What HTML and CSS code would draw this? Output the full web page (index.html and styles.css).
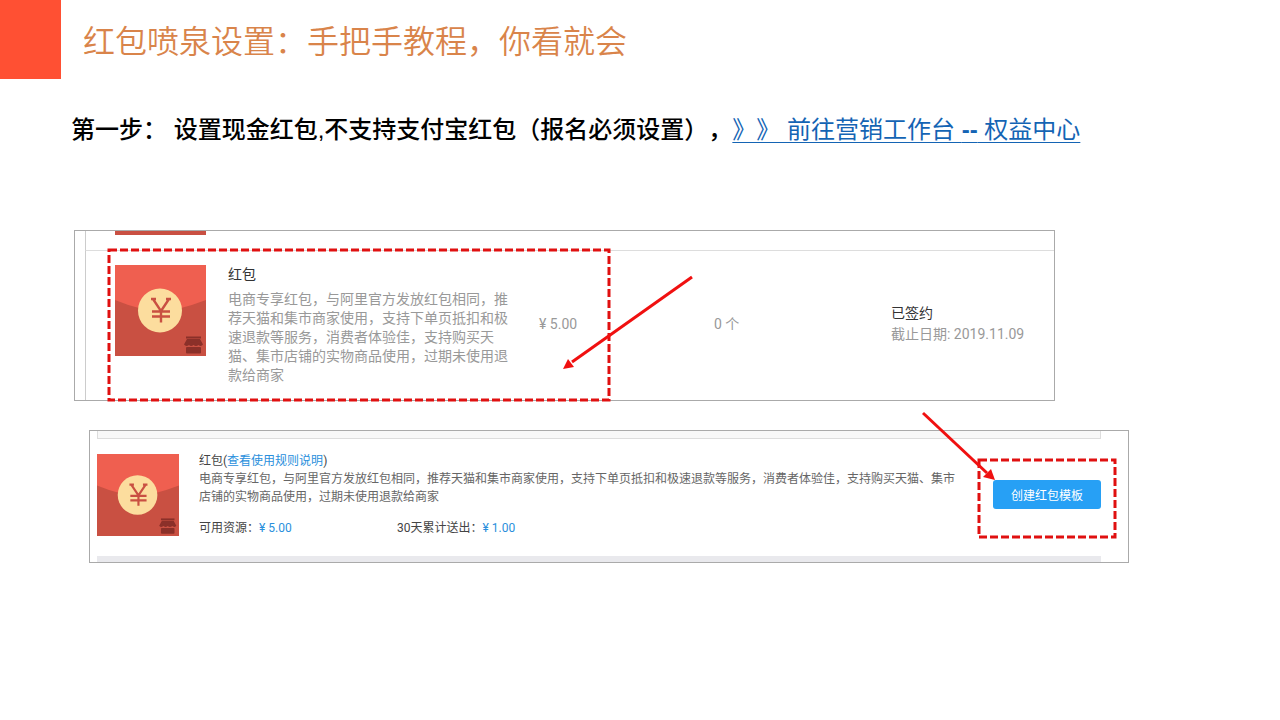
FILE: index.html
```
<!DOCTYPE html>
<html lang="zh-CN">
<head>
  <meta charset="UTF-8">
  <meta name="viewport" content="width=device-width, initial-scale=1.0">
  <title>红包喷泉设置</title>
  <link rel="stylesheet" href="styles.css">
</head>
<body>

  <svg class="defs" aria-hidden="true">
    <symbol id="envelope" viewBox="0 0 91 91">
      <rect width="91" height="91" fill="#c95042"/>
      <path d="M0 0H91V35Q78 40 66 43H24Q12 40 0 35Z" fill="#ef5f50"/>
      <circle cx="45" cy="45.500" r="22" fill="#fcdd9e"/>
      <path d="M38 34L46 46V57.500M54 34L46 46M37 46.500H55M37 51.500H55M36 34H41M51 34H56" fill="none" stroke="#c95042" stroke-width="2.4"/>
      <g fill="#8b3029">
        <rect x="71" y="71.500" width="15" height="2"/>
        <path d="M72 74H85L88 79.500Q86 82 83.500 80Q81 82 78.500 80Q76 82 74 80Q71 82 69 79.500Z"/>
        <rect x="71" y="82" width="15" height="6.500" rx="1"/>
      </g>
    </symbol>
  </svg>

  <header class="header">
    <div class="header-block"></div>
    <h1>红包喷泉设置：手把手教程，你看就会</h1>
  </header>

  <main>
    <h2 class="step">第一步： 设置现金红包,不支持支付宝红包（报名必须设置），<a href="#">》》 前往营销工作台 <b>--</b> 权益中心</a></h2>

    <!-- list of signed benefits -->
    <section class="panel panel-list">
      <div class="prev-row"><span class="prev-thumb"></span></div>
      <div class="list-row">
        <svg class="thumb" role="img" aria-label="红包"><use href="#envelope"/></svg>
        <div class="info">
          <h3>红包</h3>
          <p>电商专享红包，与阿里官方发放红包相同，推荐天猫和集市商家使用，支持下单页抵扣和极速退款等服务，消费者体验佳，支持购买天猫、集市店铺的实物商品使用，过期未使用退款给商家</p>
        </div>
        <span class="price">¥ 5.00</span>
        <span class="count">0 个</span>
        <div class="status">
          <strong>已签约</strong>
          <span>截止日期: 2019.11.09</span>
        </div>
      </div>
      <svg class="mark mark-list" aria-hidden="true">
        <rect x="2" y="2" width="500" height="150"/>
      </svg>
      <svg class="arrow arrow-list" viewBox="0 0 132 96" aria-hidden="true">
        <path d="M130 2L10 87"/>
        <polygon points="1,94 6,84 12,92"/>
      </svg>
    </section>

    <!-- create template -->
    <section class="panel panel-create">
      <div class="strip-top"></div>
      <div class="create-row">
        <svg class="thumb" role="img" aria-label="红包"><use href="#envelope"/></svg>
        <div class="info">
          <h3>红包(<a href="#">查看使用规则说明</a>)</h3>
          <p>电商专享红包，与阿里官方发放红包相同，推荐天猫和集市商家使用，支持下单页抵扣和极速退款等服务，消费者体验佳，支持购买天猫、集市店铺的实物商品使用，过期未使用退款给商家</p>
          <div class="stats">
            <span>可用资源：<b>¥ 5.00</b></span>
            <span>30天累计送出：<b>¥ 1.00</b></span>
          </div>
        </div>
        <button type="button" class="create-button">创建红包模板</button>
      </div>
      <div class="strip-bottom"></div>
      <svg class="mark mark-create" aria-hidden="true">
        <rect x="2" y="2" width="136" height="77"/>
      </svg>
      <svg class="arrow arrow-create" viewBox="0 0 76 70" aria-hidden="true">
        <path d="M2 2L66 62"/>
        <polygon points="74,69 62,66 70,58"/>
      </svg>
    </section>
  </main>

</body>
</html>
```

FILE: styles.css
```
* {
  box-sizing: border-box;
}

body {
  margin: 0;
  background: #fff;
  color: #444;
  font-family: Roboto, "Noto Sans CJK SC", sans-serif;
  text-spacing-trim: space-all;
}

h1, h2, h3, p {
  margin: 0;
  font-weight: 400;
}

.defs {
  position: absolute;
  width: 0;
  height: 0;
}

.header {
  display: flex;
  align-items: flex-start;
  gap: 22px;
}

.header-block {
  width: 61px;
  height: 79px;
  background: #ff5033;
}

h1 {
  color: #d9844a;
  font-family: "Noto Sans CJK SC", sans-serif;
  font-size: 32px;
  font-weight: 350;
  line-height: 78px;
}

.step {
  margin: 32px 71px 82px;
  color: #000;
  font-family: "Liberation Sans", "Noto Sans CJK SC", sans-serif;
  font-size: 24px;
  font-weight: 500;
  line-height: 37px;
}

.step a {
  color: #1464b4;
  font-weight: 400;
  text-decoration-thickness: 1px;
  text-underline-offset: 4px;
}

.panel {
  position: relative;
  border: 1px solid #aaa;
}

.panel-list {
  margin: 0 225px 0 74px;
  padding-left: 10px;
}

.prev-row {
  height: 20px;
  padding-left: 29px;
  border-left: 1px solid #ccc;
  border-bottom: 1px solid #ddd;
}

.prev-thumb {
  display: block;
  width: 91px;
  height: 4px;
  background: #c95042;
}

.list-row {
  display: grid;
  grid-template-columns: 91px 280px 144px 148px 1fr;
  min-height: 149px;
  padding: 14px 0 14px 29px;
  border-left: 1px solid #ccc;
  color: #999;
  font-size: 14px;
  line-height: 19px;
}

.thumb {
  display: block;
  width: 91px;
  height: 91px;
}

.list-row .info {
  width: 280px;
  margin-left: 22px;
  font-weight: 350;
}

.list-row h3 {
  margin-bottom: 6px;
  color: #333;
  font-size: 14px;
  line-height: 19px;
}

.price, .count {
  margin-top: 50px;
}

.price {
  margin-left: 53px;
}

.count {
  margin-left: 84px;
}

.status {
  display: flex;
  flex-direction: column;
  gap: 2px;
  margin-top: 39px;
  margin-left: 113px;
}

.status strong {
  color: #333;
  font-weight: 400;
}

.panel-create {
  margin: 29px 151px 0 89px;
  padding: 0 27px 0 7px;
}

.strip-top {
  height: 8px;
  background: #f8f8f8;
  border: 1px solid #ddd;
  border-top: none;
}

.strip-bottom {
  height: 6px;
  background: #e9e9ed;
}

.create-row {
  display: grid;
  grid-template-columns: 82px 1fr 108px;
  min-height: 117px;
  padding-top: 15px;
}

.create-row .thumb {
  width: 82px;
  height: 82px;
}

.create-row .info {
  margin: 0 32px 0 20px;
  color: #666;
  font-size: 12px;
  line-height: 18px;
}

.create-row h3 {
  margin-top: -2px;
  color: #444;
  font-size: 12px;
}

.create-row .info a {
  color: #2a8fdc;
  text-decoration: none;
}

.stats {
  display: grid;
  grid-template-columns: 198px 1fr;
  margin-top: 13px;
  color: #444;
}

.stats b {
  color: #2a8fdc;
  font-weight: 400;
}

.create-button {
  align-self: start;
  height: 29px;
  margin-top: 26px;
  padding: 0;
  border: none;
  border-radius: 3px;
  background: #27a0f5;
  color: #fff;
  font-family: inherit;
  font-size: 12px;
  cursor: pointer;
}

/* red notes drawn over the panels */
.mark, .arrow {
  position: absolute;
  overflow: visible;
  pointer-events: none;
}

.mark rect {
  fill: none;
  stroke: #e01010;
  stroke-width: 3;
  stroke-dasharray: 8 3;
}

.mark-list {
  top: 17px;
  left: 32px;
  width: 505px;
  height: 154px;
}

.mark-create {
  top: 27px;
  right: 11px;
  width: 140px;
  height: 81px;
}

.arrow path {
  stroke: #f01010;
  stroke-width: 3;
}

.arrow polygon {
  fill: #f01010;
}

.arrow-list {
  top: 44px;
  left: 487px;
  width: 132px;
  height: 96px;
}

.arrow-create {
  top: -20px;
  right: 131px;
  width: 76px;
  height: 70px;
}
```
